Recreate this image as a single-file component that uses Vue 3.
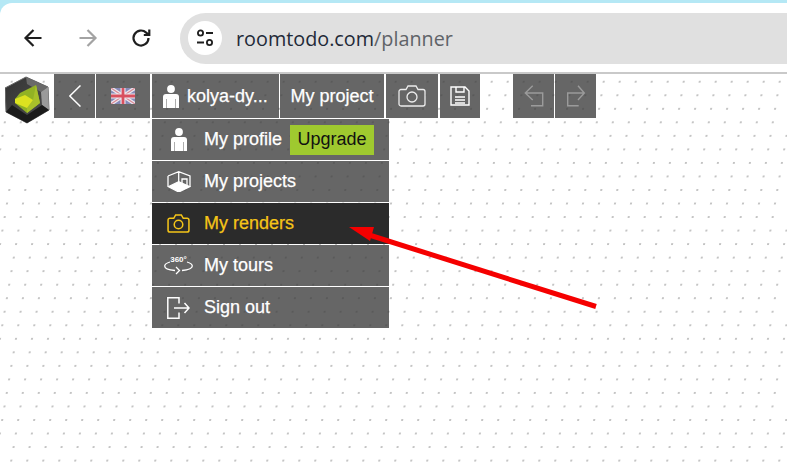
<script setup>
const menu = [
  { key: 'profile', label: 'My profile', upgrade: true },
  { key: 'projects', label: 'My projects' },
  { key: 'renders', label: 'My renders', active: true },
  { key: 'tours', label: 'My tours' },
  { key: 'signout', label: 'Sign out' },
]
</script>

<template>
  <div class="page">
    <div class="tabstrip"></div>
    <header class="chrome">
      <svg class="nav-icon back" viewBox="0 0 24 24"><path d="M20.500 12H5M12.500 4 4.500 12l8 8" /></svg>
      <svg class="nav-icon forward" viewBox="0 0 24 24"><path d="M3.500 12H19M11.500 4l8 8-8 8" /></svg>
      <svg class="nav-icon reload" viewBox="0 0 24 24"><path d="M19.500 12a7.500 7.500 0 1 1-2.300-5.400L20 9M20.300 3.500V9h-5.500" /></svg>
      <div class="omnibox">
        <span class="site-chip">
          <svg viewBox="0 0 20 20" class="tune"><circle cx="5.500" cy="5" r="2.600" /><path d="M11 5h7M2 14.500h7" /><circle cx="14.500" cy="14.500" r="2.600" /></svg>
        </span>
        <span class="url">roomtodo.com<span class="path">/planner</span></span>
      </div>
    </header>

    <main class="canvas">
      <svg class="dots" width="787" height="389" aria-hidden="true">
        <defs>
          <pattern id="dotgrid" width="16" height="13.530" patternUnits="userSpaceOnUse" patternTransform="matrix(1 0 -0.17 1 0 0)">
            <circle cx="13" cy="7.700" r="1" fill="#b0b0b0" />
          </pattern>
        </defs>
        <rect width="787" height="389" fill="url(#dotgrid)" />
      </svg>

      <div class="toolbar">
        <svg class="logo" viewBox="5 74 46 50">
          <defs>
            <linearGradient id="hexfill" x1="0" y1="0" x2="1" y2="1">
              <stop offset="0" stop-color="#333" />
              <stop offset="1" stop-color="#505050" />
            </linearGradient>
          </defs>
          <polygon points="26,77 48,87 49,110 27,123 6,112 5,88" fill="url(#hexfill)" stroke="#666" stroke-width="1" stroke-linejoin="round" />
          <polygon points="26,77 48,87 41,92 27,84" fill="#6a6a6a" />
          <polygon points="48,87 49,110 42,105 41,92" fill="#9a9a9a" />
          <polygon points="6,112 27,123 49,110 42,105 27,115 12,105" fill="#1b1b1b" />
          <polygon points="20,93 36,85 40,103 27,113 15,103 15,99" fill="#92b224" />
          <polygon points="33,100 36,85 40,103 27,113 27,108" fill="#a8c02a" />
          <polygon points="15,99 25,95 33,100 27,108 15,103" fill="#dde220" />
        </svg>
        <div class="tool back-btn">
          <svg viewBox="0 0 12 22" class="chev"><path d="M11.500 .5 .8 11l10.700 10.500" /></svg>
        </div>
        <div class="tool flag-btn">
          <svg viewBox="0 0 24 16" class="flag">
            <rect width="24" height="16" fill="#8589b8" />
            <path d="M0 0 24 16M24 0 0 16" stroke="#ece8ee" stroke-width="3.600" />
            <path d="M0 0 24 16M24 0 0 16" stroke="#d98a96" stroke-width="1.200" />
            <path d="M12 0v16M0 8h24" stroke="#ece8ee" stroke-width="5" />
            <path d="M12 0v16M0 8h24" stroke="#d9505f" stroke-width="2.800" />
          </svg>
        </div>
        <div class="tool user-btn">
          <svg viewBox="0 0 16 23" class="person"><circle cx="8" cy="4" r="3.900" /><path d="M3 9h10a3 3 0 0 1 3 3v11H0V12a3 3 0 0 1 3-3Z" /><path class="seam" d="M3.500 14v9M12.500 14v9" /></svg>
          <span class="label">kolya-dy...</span>
        </div>
        <div class="tool project-btn"><span class="label">My project</span></div>
        <div class="tool camera-btn">
          <svg viewBox="0 0 28 22" class="stroke-icon cam"><path d="M1 6.500a2 2 0 0 1 2-2h5L10 1h8l2 3.500h5a2 2 0 0 1 2 2V19a2 2 0 0 1-2 2H3a2 2 0 0 1-2-2Z" /><circle cx="14" cy="12" r="5" /></svg>
        </div>
        <div class="tool save-btn">
          <svg viewBox="0 0 20 20" class="stroke-icon save"><path d="M1 1h14l4 4v14H1ZM6 1v5h8V1M5 11h10M5 14h10M5 17h10" /></svg>
        </div>
        <div class="tool undo-btn muted">
          <svg viewBox="0 0 20 22" class="stroke-icon hist"><path d="M8.700 .7 1.300 8l7.400 7M1.300 8h17.400v12.700H7" /></svg>
        </div>
        <div class="tool redo-btn muted">
          <svg viewBox="0 0 20 22" class="stroke-icon hist"><path d="M12 .7 18.300 8 12 15M18.300 8H1.700v12.700h11" /></svg>
        </div>
      </div>

      <nav class="menu">
        <div v-for="item in menu" :key="item.key" class="row" :class="{ active: item.active }">
          <span class="row-icon">
            <svg v-if="item.key === 'profile'" viewBox="0 0 16 23" class="person"><circle cx="8" cy="4" r="3.900" /><path d="M3 9h10a3 3 0 0 1 3 3v11H0V12a3 3 0 0 1 3-3Z" /><path class="seam" d="M3.500 14v9M12.500 14v9" /></svg>
            <svg v-else-if="item.key === 'projects'" viewBox="0 0 24 21.500" class="stroke-icon proj"><path d="M1 5 11.700.7 23 5v10.700M1 5v10.700M11.700.7V11M15 14V8h5v7" /><path d="M1.700 15.700 11.700 10.700 22.700 15.700 11.700 21Z" class="solid" /></svg>
            <svg v-else-if="item.key === 'renders'" viewBox="0 0 24 20" class="stroke-icon cam-small"><path d="M1 6.500a2 2 0 0 1 2-2h4L9 1h6l2 3.500h4a2 2 0 0 1 2 2v10.500a2 2 0 0 1-2 2H3a2 2 0 0 1-2-2Z" /><circle cx="12" cy="11" r="4.500" /></svg>
            <svg v-else-if="item.key === 'tours'" viewBox="0 0 29 19" class="tours">
              <text x="14.500" y="6" text-anchor="middle" class="deg">360°</text>
              <path d="M6 6C2.500 7 .7 8 .7 10 .7 12.500 5 14 11 14.500M23 6C26.500 7 28.300 8 28.300 10 28.300 12.500 23 14 18 14.500" />
              <path d="M12 11l3.500 3.500L12 18" />
            </svg>
            <svg v-else viewBox="0 0 23 22" class="stroke-icon out"><path d="M12 6.500V.8H.8v20.400H12v-5.700M7 11h15M17.500 6l4.500 5-4.500 5" /></svg>
          </span>
          <span class="row-label label">{{ item.label }}</span>
          <span v-if="item.upgrade" class="upgrade">Upgrade</span>
        </div>
      </nav>

      <svg class="arrow" width="260" height="95" viewBox="345 222 260 95" aria-hidden="true">
        <line x1="596" y1="306.500" x2="366" y2="234" stroke="#f50000" stroke-width="5" />
        <polygon points="349,227 374,227 370,241" fill="#f50000" />
      </svg>
    </main>
  </div>
</template>

<style>
html, body { margin: 0; background: #fff; }
</style>

<style scoped>
.page {
  width: 787px;
  height: 463px;
  overflow: hidden;
  position: relative;
  background: #b5e8f5;
  font-family: "Liberation Sans", Arial, sans-serif;
}
.tabstrip { height: 3px; }
.chrome {
  height: 69px;
  background: #fff;
  border-radius: 12px 0 0 0;
  border-bottom: 2px solid #c9c9c9;
  display: flex;
  align-items: center;
}
.nav-icon {
  width: 24px;
  height: 24px;
  fill: none;
  stroke-width: 2.200;
  flex: none;
}
.back { stroke: #1f1f1f; margin-left: 21px; }
.forward { stroke: #a3a3a3; margin-left: 31px; margin-right: -1px; }
.reload { stroke: #1f1f1f; margin-left: 30px; }
.omnibox {
  margin-left: 27px;
  flex: 1;
  height: 51px;
  margin-top: 1px;
  background: #e0e0e0;
  border-radius: 26px 0 0 26px;
  display: flex;
  align-items: center;
  padding-left: 8px;
}
.site-chip {
  width: 34px;
  height: 34px;
  border-radius: 50%;
  background: #fff;
  display: flex;
  align-items: center;
  justify-content: center;
}
.tune { width: 20px; height: 20px; fill: none; stroke: #1f1f1f; stroke-width: 1.800; }
.url {
  margin-left: 14px;
  font: 19.800px "Open Sans", "Noto Sans", sans-serif;
  color: #1f2a38;
}
.path { color: #5f6368; }

.canvas {
  position: relative;
  height: 389px;
  background: #fff;
}
.dots { position: absolute; left: 0; top: 0; }
.toolbar {
  position: relative;
  display: flex;
  height: 44px;
  padding-left: 5px;
}
.logo { width: 46px; height: 50px; flex: none; margin-right: 3px; }
.tool {
  height: 44px;
  background: rgba(64, 64, 64, 0.8);
  color: #fff;
  display: flex;
  align-items: center;
  justify-content: center;
  font-size: 18px;
  flex: none;
}
.label { -webkit-text-stroke: 0.25px currentColor; }
.back-btn { width: 41px; margin-right: 1px; }
.flag-btn { width: 54px; margin-right: 2px; }
.user-btn { width: 127px; margin-right: 1px; gap: 8px; justify-content: flex-start; padding-left: 11px; box-sizing: border-box; }
.project-btn { width: 104px; margin-right: 2px; }
.camera-btn { width: 52px; margin-right: 2px; }
.save-btn { width: 40px; margin-right: 33px; }
.undo-btn { width: 41px; margin-right: 1px; }
.redo-btn { width: 41px; }
.chev { width: 12px; height: 22px; fill: none; stroke: #fff; stroke-width: 1.500; }
.flag { width: 24px; height: 16px; }
.person { width: 16px; height: 23px; fill: #fff; flex: none; }
.seam { fill: none; stroke: #777; stroke-width: 0.6; }
.stroke-icon { fill: none; stroke: #fff; stroke-width: 1.300; flex: none; }
.cam { width: 28px; height: 22px; stroke: #ececec; }
.save { width: 20px; height: 20px; stroke-width: 1.400; }
.hist { width: 20px; height: 22px; stroke: #9b9b9b; stroke-width: 1.400; }

.menu {
  position: absolute;
  left: 152px;
  top: 45px;
  width: 237px;
  display: flex;
  flex-direction: column;
  gap: 1px;
}
.row {
  height: 41px;
  background: rgba(64, 64, 64, 0.8);
  color: #fff;
  display: flex;
  align-items: center;
  font-size: 18px;
}
.row.active { background: #2b2b2b; color: #f5c518; }
.row-icon {
  width: 52px;
  flex: none;
  display: flex;
  justify-content: center;
  align-items: center;
  padding-left: 1px;
  box-sizing: border-box;
}
.proj { width: 24px; height: 21.500px; }
.solid { fill: #fff; }
.cam-small { width: 23px; height: 19px; stroke: #f5c518; stroke-width: 1.600; }
.tours { width: 29px; height: 19px; fill: none; stroke: #fff; stroke-width: 1.300; }
.deg { font: bold 8px "Liberation Sans", sans-serif; fill: #fff; stroke: none; }
.out { width: 23px; height: 22px; stroke-width: 1.500; }
.upgrade {
  margin-left: 8px;
  width: 84px;
  height: 30px;
  background: #9fc92f;
  color: #111;
  display: flex;
  align-items: center;
  justify-content: center;
}
.arrow { position: absolute; left: 345px; top: 148px; }
</style>
